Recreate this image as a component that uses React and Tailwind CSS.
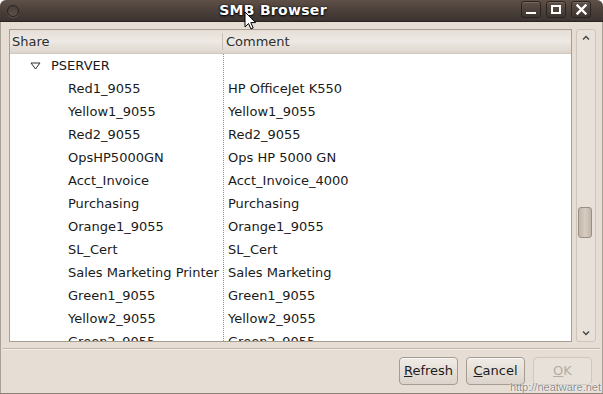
import React from "react";

const rows = [
  ["Red1_9055", "HP OfficeJet K550"],
  ["Yellow1_9055", "Yellow1_9055"],
  ["Red2_9055", "Red2_9055"],
  ["OpsHP5000GN", "Ops HP 5000 GN"],
  ["Acct_Invoice", "Acct_Invoice_4000"],
  ["Purchasing", "Purchasing"],
  ["Orange1_9055", "Orange1_9055"],
  ["SL_Cert", "SL_Cert"],
  ["Sales Marketing Printer", "Sales Marketing"],
  ["Green1_9055", "Green1_9055"],
  ["Yellow2_9055", "Yellow2_9055"],
  ["Green2_9055", "Green2_9055"],
];

function TitleButton({ children }) {
  return (
    <div className="w-[20px] h-[17px] rounded-[3px] border border-[#2a2420] bg-gradient-to-b from-[#5e5048] to-[#3e3530] shadow-[inset_0_1px_0_rgba(255,255,255,0.15)] flex items-center justify-center">
      {children}
    </div>
  );
}

function Btn({ children, disabled }) {
  return (
    <div
      className={
        "w-[59px] h-[28px] rounded-[4px] border flex items-center justify-center text-[13px] " +
        (disabled
          ? "border-[#d0c8bf] text-[#b4ada5] bg-[#e8e1d9]"
          : "border-[#a69b90] text-[#1c1c1c] bg-gradient-to-b from-[#f0ebe6] to-[#dcd4cb] shadow-[inset_0_1px_0_#fbf9f7]")
      }
    >
      {children}
    </div>
  );
}

export default function App() {
  return (
    <div
      className="w-[603px] h-[394px] flex flex-col bg-[#e6ded5] relative overflow-hidden rounded-t-[6px]"
      style={{ fontFamily: '"DejaVu Sans", sans-serif' }}
    >
      {/* Title bar */}
      <div className="h-[22px] shrink-0 bg-gradient-to-b from-[#5f5048] via-[#4b403a] to-[#3c3430] border-b border-[#2a2320] relative flex items-center px-[7px]">
        <div className="w-[12px] h-[12px] rounded-full border border-[#2a2420] bg-gradient-to-b from-[#4a3f39] to-[#5d5049] shadow-[0_1px_0_rgba(255,255,255,0.15)]" />
        <div className="flex-1 text-center text-white font-bold text-[14px] leading-none tracking-[0.3px] [text-shadow:0_0_2px_#000,0_1px_2px_#000] translate-x-[3px] -mt-[1px]">
          SMB Browser
        </div>
        <div className="flex gap-[5px] mr-[5px] -mt-[2px]">
          <TitleButton>
            <div className="w-[10px] h-[2px] bg-white mt-[6px]" />
          </TitleButton>
          <TitleButton>
            <div className="w-[10px] h-[9px] border-2 border-white" />
          </TitleButton>
          <TitleButton>
            <svg width="11" height="11" viewBox="0 0 11 11">
              <path d="M1.5 1.5 L9.5 9.5 M9.5 1.5 L1.5 9.5" stroke="white" strokeWidth="2.4" strokeLinecap="square" />
            </svg>
          </TitleButton>
        </div>
        {/* mouse cursor */}
        <svg className="absolute left-[244px] top-[11px]" width="13" height="20" viewBox="0 0 13 20">
          <path d="M1 1 L1 16 L4.5 12.5 L7 18 L9.2 17 L6.8 11.6 L11.5 11.6 Z" fill="white" stroke="black" strokeWidth="1" strokeLinejoin="round" />
        </svg>
      </div>

      {/* Body */}
      <div className="flex-1 flex flex-col border-x border-[#a9a096]">
        <div className="flex gap-[4px] pl-[8px] pr-[6px] pt-[7px]">
          {/* List */}
          <div className="flex-1 h-[313px] border border-[#a99e92] bg-white overflow-hidden flex flex-col">
            <div className="h-[24px] shrink-0 flex bg-gradient-to-b from-[#e6dfd8] via-[#eee9e4] to-[#ddd5cc] border-b border-[#d2c9bf] text-[13px] text-[#2e2e2e]">
              <div className="w-[213px] flex items-center pl-[2px] border-r border-[#c9bfb4] my-[3px]">Share</div>
              <div className="flex-1 flex items-center pl-[3px]">Comment</div>
            </div>
            <div className="flex-1 relative text-[13px] text-[#1a1a1a]">
              <div className="absolute left-[213px] top-0 bottom-0 border-l border-dotted border-[#8c8c8c]" />
              <div className="h-[23px] flex items-center pl-[20px]">
                <svg width="11" height="8" viewBox="0 0 11 8" className="mr-[10px]">
                  <path d="M1 1 L10 1 L5.5 7 Z" fill="white" stroke="#2e2e2e" strokeWidth="1" strokeLinejoin="round" />
                </svg>
                <span>PSERVER</span>
              </div>
              {rows.map(([a, b]) => (
                <div key={a} className="h-[23px] flex items-center">
                  <div className="w-[213px] pl-[58px] whitespace-nowrap overflow-hidden">{a}</div>
                  <div className="pl-[5px] whitespace-nowrap">{b}</div>
                </div>
              ))}
            </div>
          </div>
          {/* Scrollbar */}
          <div className="w-[20px] h-[313px] border border-[#cfc5ba] rounded-[3px] bg-[#e8e1da] flex flex-col items-center justify-between py-[5px] relative">
            <svg width="8" height="5" viewBox="0 0 8 5">
              <path d="M1 4.5 L4 1.5 L7 4.5" fill="none" stroke="#4a4a4a" strokeWidth="1.5" />
            </svg>
            <div className="absolute left-[1px] top-[177px] w-[14px] h-[31px] rounded-[3px] border border-[#9c8f82] bg-gradient-to-r from-[#c2b6aa] via-[#d6ccc2] to-[#c2b6aa]" />
            <svg width="8" height="5" viewBox="0 0 8 5">
              <path d="M1 0.5 L4 3.5 L7 0.5" fill="none" stroke="#4a4a4a" strokeWidth="1.5" />
            </svg>
          </div>
        </div>
        <div className="mt-[6px] mx-[2px] border-t border-[#c3b7ab] shadow-[0_1px_0_#f4efea]" />
        <div className="flex justify-end gap-[8px] pr-[10px] pt-[8px]">
          <Btn><span><span className="underline">R</span>efresh</span></Btn>
          <Btn><span><span className="underline">C</span>ancel</span></Btn>
          <Btn disabled><span><span className="underline">O</span>K</span></Btn>
        </div>
      </div>
      <div className="h-[1px] bg-[#8a8076]" />
      {/* watermark */}
      <div
        className="absolute right-[2px] bottom-[1px] text-[11px] leading-none text-[#8a8a8a] [text-shadow:0_0_2px_#fff,0_0_1px_#fff]"
        style={{ fontFamily: '"Liberation Sans", sans-serif' }}
      >
        http://neatware.net
      </div>
    </div>
  );
}
